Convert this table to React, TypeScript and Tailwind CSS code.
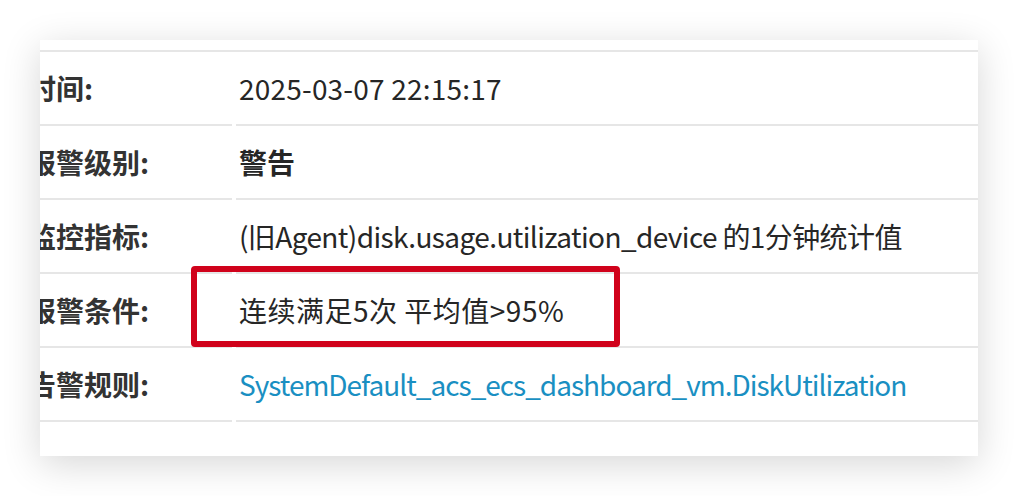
const rows: { label: string; value: string; bold?: boolean; link?: boolean; tracking?: string }[] = [
  { label: '时间:', value: '2025-03-07 22:15:17', tracking: 'tracking-[0.2px]' },
  { label: '报警级别:', value: '警告', bold: true },
  { label: '监控指标:', value: '(旧Agent)disk.usage.utilization_device 的1分钟统计值', tracking: 'tracking-[-0.6px]' },
  { label: '报警条件:', value: '连续满足5次 平均值>95%', tracking: 'tracking-[0.5px]' },
  { label: '告警规则:', value: 'SystemDefault_acs_ecs_dashboard_vm.DiskUtilization', link: true, tracking: 'tracking-[-1px]' },
];

export default function App() {
  return (
    <div
      className="w-[1018px] h-[496px] bg-white pt-[40px] pl-[40px]"
      style={{ fontFamily: '"Noto Sans CJK SC", "Noto Sans", sans-serif' }}
    >
      <div className="relative w-[938px] h-[416px] bg-white overflow-hidden shadow-[0_8px_36px_rgba(0,0,0,0.16)]">
        <div className="h-[12px] border-b-2 border-[#e6e6e6]" />
        {rows.map(row => (
          <div key={row.label} className="grid grid-cols-[192px_1fr] gap-x-[4px]">
            <div className="h-[74px] border-b-2 border-[#e6e6e6] flex items-center">
              <span className="-ml-[12px] text-[28px] font-bold text-[#333] whitespace-nowrap">{row.label}</span>
            </div>
            <div className="h-[74px] border-b-2 border-[#e6e6e6] flex items-center pl-[3px]">
              <span
                className={
                  'text-[28px] whitespace-nowrap ' +
                  (row.link ? 'text-[#1a8fc2]' : 'text-[#262626]') +
                  (row.bold ? ' font-bold' : '') +
                  (row.tracking ? ' ' + row.tracking : '')
                }
              >
                {row.value}
              </span>
            </div>
          </div>
        ))}
        <div className="absolute left-[151px] top-[226px] w-[429px] h-[81px] border-[6px] border-[#d0021b] rounded-[4px]" />
      </div>
    </div>
  );
}
